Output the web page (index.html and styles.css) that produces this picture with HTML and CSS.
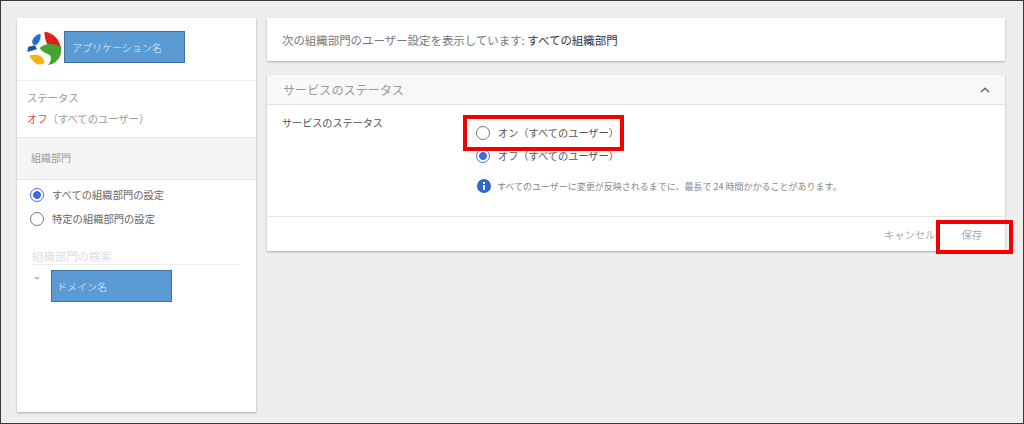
FILE: index.html
```html
<!DOCTYPE html>
<html lang="ja">
<head>
<meta charset="utf-8">
<title>サービスのステータス</title>
<link rel="stylesheet" href="styles.css">
</head>
<body>
<div class="frame">
  <aside class="side card">
    <div class="app">
      <svg class="logo" width="35" height="34" viewBox="0 0 100 100">
        <path d="M50 2C75 5 92 22 98 48L58 38C52 28 50 15 50 2Z" fill="#e0201b"/>
        <path d="M36 50C52 34 80 36 99 48C103 75 85 98 60 100C72 88 72 72 60 68C50 64 40 58 36 50Z" fill="#45a32f"/>
        <path d="M38 8C40 22 35 35 24 42C15 42 12 34 15 26C20 16 28 10 38 8Z" fill="#1f6fd0"/>
        <path d="M2 46L22 42L28 54L0 62C0 56 1 50 2 46Z" fill="#1b57ad"/>
        <path d="M6 72C20 68 36 70 46 80L50 95C40 100 32 100 26 96C16 90 10 82 6 72Z" fill="#f2b50f"/>
      </svg>
      <div class="mask mask-app">アプリケーション名</div>
    </div>
    <div class="status">
      <div class="status-label">ステータス</div>
      <div class="status-value"><span class="off">オフ</span>（すべてのユーザー）</div>
    </div>
    <div class="org-head">組織部門</div>
    <div class="org-body">
      <label class="radio-row"><span class="radio on"></span>すべての組織部門の設定</label>
      <label class="radio-row"><span class="radio"></span>特定の組織部門の設定</label>
      <div class="search">組織部門の検索</div>
      <div class="tree">
        <span class="caret"></span>
        <div class="mask mask-domain">ドメイン名</div>
      </div>
    </div>
  </aside>
  <main class="main">
    <div class="card notice">次の組織部門のユーザー設定を表示しています: <span class="strong">すべての組織部門</span></div>
    <section class="card panel">
      <header class="panel-head">
        <span>サービスのステータス</span>
        <svg width="12" height="8" viewBox="0 0 12 8"><path d="M2 6L6 2.2L10 6" fill="none" stroke="#666" stroke-width="1.5"/></svg>
      </header>
      <div class="panel-body">
        <div class="field-label">サービスのステータス</div>
        <div class="options">
          <label class="radio-row opt"><span class="radio"></span>オン（すべてのユーザー）</label>
          <label class="radio-row opt"><span class="radio on"></span>オフ（すべてのユーザー）</label>
          <div class="hint">
            <svg width="14" height="14" viewBox="0 0 14 14"><circle cx="7" cy="7" r="7" fill="#2f66d0"/><rect x="6" y="6" width="2" height="5" fill="#fff"/><rect x="6" y="3" width="2" height="2" fill="#fff"/></svg>
            <span>すべてのユーザーに変更が反映されるまでに、最長で 24 時間かかることがあります。</span>
          </div>
        </div>
      </div>
      <footer class="panel-foot">
        <span class="btn cancel">キャンセル</span>
        <span class="btn save">保存</span>
      </footer>
    </section>
  </main>
  <div class="callout callout-on"></div>
  <div class="callout callout-save"></div>
</div>
</body>
</html>
```
FILE: styles.css
```css
* { box-sizing: border-box; }
html, body { margin: 0; height: 100%; }
body {
  font-family: "Noto Sans CJK JP", "Roboto", sans-serif;
  overflow: hidden;
}
.frame {
  position: relative;
  width: 1024px;
  height: 424px;
  background: #eeeeee;
  border: 1px solid #3a3a3a;
  padding: 17px 18px 11px 16px;
  display: flex;
  gap: 11px;
  color: #555;
}
.card {
  background: #fff;
  box-shadow: 0 1px 2px rgba(0,0,0,.28);
}
.side { width: 239px; display: flex; flex-direction: column; flex: none; }
.app {
  height: 63px;
  display: flex;
  align-items: flex-start;
  gap: 2px;
  padding: 13px 0 0 10px;
  border-bottom: 1px solid #eee;
}
.logo { flex: none; }
.mask {
  background: #5b9bd5;
  border: 1px solid #41719c;
  color: #e9f1f9;
  width: 121px;
  height: 32px;
  display: flex;
  align-items: center;
  font-size: 10px;
  font-weight: 300;
}
.mask-app { padding-left: 7px; }
.mask-domain { padding-left: 5px; }
.status {
  height: 57px;
  padding: 9px 0 0 10px;
  font-size: 10.3px;
  color: #999;
  border-bottom: 1px solid #e4e4e4;
}
.status-label { line-height: 16px; }
.status-value { line-height: 16px; margin-top: 5px; }
.off { color: #dd4b39; }
.org-head {
  height: 42px;
  background: #f5f5f5;
  border-bottom: 1px solid #e4e4e4;
  padding: 12px 0 0 14px;
  font-size: 10px;
  line-height: 16px;
  color: #999;
}
.org-body { padding: 3px 16px 0 13px; flex: 1; }
.radio-row {
  display: flex;
  align-items: center;
  font-size: 10.3px;
  line-height: 16px;
  height: 24px;
  color: #666;
}
.radio {
  width: 14px;
  height: 14px;
  border-radius: 50%;
  border: 1.5px solid #777;
  margin-right: 8px;
  flex: none;
  background: #fff;
}
.radio.on {
  border-color: #3b6fe0;
  background: radial-gradient(circle, #3b6fe0 0 3.6px, #fff 4.2px);
}
.search {
  margin-top: 17px;
  margin-left: 2px;
  height: 17px;
  font-size: 11.4px;
  line-height: 16px;
  color: #dedede;
  border-bottom: 1px solid #eee;
}
.tree { display: flex; align-items: flex-start; margin-top: 5px; margin-left: 2px; gap: 11px; }
.caret {
  width: 0;
  height: 0;
  margin: 7px 0 0 2px;
  border: 3px solid transparent;
  border-top: 3px solid #bbb;
  border-bottom: 0;
  flex: none;
}
.main { flex: 1; display: flex; flex-direction: column; gap: 14px; }
.notice {
  height: 43px;
  display: flex;
  align-items: center;
  padding-left: 15px;
  font-size: 11.45px;
  color: #777;
  white-space: pre;
}
.strong { color: #333; }
.panel { height: 176px; display: flex; flex-direction: column; }
.panel-head {
  height: 30px;
  background: #f8f8f8;
  border-bottom: 1px solid #e4e4e4;
  display: flex;
  align-items: center;
  justify-content: space-between;
  padding: 0 14px 0 16px;
  font-size: 12.1px;
  color: #999;
}
.panel-body { flex: 1; display: flex; padding-top: 10px; }
.field-label {
  width: 195px;
  padding-left: 15px;
  font-size: 10.1px;
  line-height: 16px;
  color: #555;
}
.options { flex: 1; padding-top: 6px; }
.opt { height: 23px; margin-left: 14px; font-size: 10.2px; color: #555; }
.hint {
  display: flex;
  align-items: center;
  gap: 6px;
  margin: 12px 0 0 15px;
  font-size: 9px;
  color: #888;
}
.panel-foot {
  height: 35px;
  border-top: 1px solid #e6e6e6;
  display: flex;
  align-items: center;
  justify-content: flex-end;
  font-size: 10.3px;
  color: #aaa;
  padding-right: 23px;
}
.btn.save { margin-left: 26px; }
.callout {
  position: absolute;
  border: 4px solid #f50000;
}
.callout-on { left: 462px; top: 114px; width: 161px; height: 36px; }
.callout-save { left: 935px; top: 219px; width: 77px; height: 34px; }
```
